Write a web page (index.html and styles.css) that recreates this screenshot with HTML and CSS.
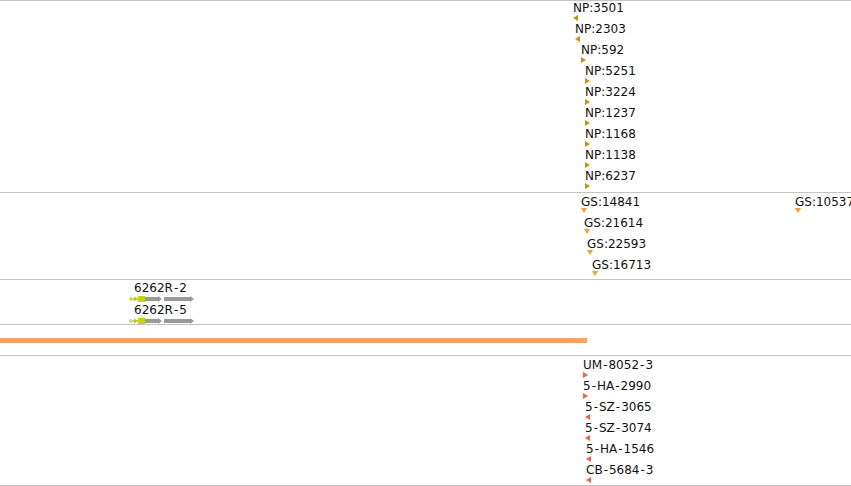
FILE: index.html
```html
<!DOCTYPE html>
<html lang="en">
<head>
    <meta charset="UTF-8">
    <title>Tracks</title>
    <link rel="stylesheet" href="styles.css">
</head>
<body>
    <div class="browser">
        <section class="track track-np">
            <div class="row"><span class="feat" style="left:573px"><span class="label">NP:3501</span><span class="tri tri-left np"></span></span></div>
            <div class="row"><span class="feat" style="left:575px"><span class="label">NP:2303</span><span class="tri tri-left np"></span></span></div>
            <div class="row"><span class="feat" style="left:581px"><span class="label">NP:592</span><span class="tri tri-right np"></span></span></div>
            <div class="row"><span class="feat" style="left:585px"><span class="label">NP:5251</span><span class="tri tri-right np"></span></span></div>
            <div class="row"><span class="feat" style="left:585px"><span class="label">NP:3224</span><span class="tri tri-right np"></span></span></div>
            <div class="row"><span class="feat" style="left:585px"><span class="label">NP:1237</span><span class="tri tri-right np"></span></span></div>
            <div class="row"><span class="feat" style="left:585px"><span class="label">NP:1168</span><span class="tri tri-right np"></span></span></div>
            <div class="row"><span class="feat" style="left:585px"><span class="label">NP:1138</span><span class="tri tri-right np"></span></span></div>
            <div class="row"><span class="feat" style="left:585px"><span class="label">NP:6237</span><span class="tri tri-right np"></span></span></div>
        </section>

        <section class="track track-gs">
            <div class="row">
                <span class="feat" style="left:581px"><span class="label">GS:14841</span><span class="tri tri-down gs"></span></span>
                <span class="feat" style="left:795px"><span class="label">GS:10537</span><span class="tri tri-down gs"></span></span>
            </div>
            <div class="row"><span class="feat" style="left:584px"><span class="label">GS:21614</span><span class="tri tri-down gs"></span></span></div>
            <div class="row"><span class="feat" style="left:587px"><span class="label">GS:22593</span><span class="tri tri-down gs"></span></span></div>
            <div class="row"><span class="feat" style="left:592px"><span class="label">GS:16713</span><span class="tri tri-down gs"></span></span></div>
        </section>

        <section class="track track-gene">
            <div class="row row-gene">
                <span class="feat" style="left:128px">
                    <span class="label label-gene">6262R<span class="dash">-</span>2</span>
                    <svg class="gene" width="68" height="8" viewBox="0 0 68 8">
                        <rect x="1" y="3.5" width="10" height="1" fill="#a0a0a0"/>
                        <polygon points="2,1.5 6,4 2,6.5" fill="#c8dc50"/>
                        <polygon points="6,1.5 10,4 6,6.5" fill="#b4cc20"/>
                        <rect x="10" y="1" width="7" height="6" fill="#c2d500"/>
                        <polygon points="17,2 30,2 30,1 34,4 30,7 30,6 17,6" fill="#9a9a9a"/>
                        <polygon points="36,2 62,2 62,1 66,4 62,7 62,6 36,6" fill="#9a9a9a"/>
                    </svg>
                </span>
            </div>
            <div class="row row-gene">
                <span class="feat" style="left:128px">
                    <span class="label label-gene">6262R<span class="dash">-</span>5</span>
                    <svg class="gene" width="68" height="8" viewBox="0 0 68 8">
                        <rect x="1" y="3.5" width="10" height="1" fill="#a0a0a0"/>
                        <polygon points="2,1.5 6,4 2,6.5" fill="#c8dc50"/>
                        <polygon points="6,1.5 10,4 6,6.5" fill="#b4cc20"/>
                        <rect x="10" y="1" width="7" height="6" fill="#c2d500"/>
                        <polygon points="17,2 30,2 30,1 34,4 30,7 30,6 17,6" fill="#9a9a9a"/>
                        <polygon points="36,2 62,2 62,1 66,4 62,7 62,6 36,6" fill="#9a9a9a"/>
                    </svg>
                </span>
            </div>
        </section>

        <section class="track track-bar">
            <div class="range-bar" style="width:587px"></div>
        </section>

        <section class="track track-snp">
            <div class="row"><span class="feat" style="left:583px"><span class="label">UM<span class="dash">-</span>8052<span class="dash">-</span>3</span><span class="tri tri-right snp"></span></span></div>
            <div class="row"><span class="feat" style="left:583px"><span class="label">5<span class="dash">-</span>HA<span class="dash">-</span>2990</span><span class="tri tri-right snp"></span></span></div>
            <div class="row"><span class="feat" style="left:585px"><span class="label">5<span class="dash">-</span>SZ<span class="dash">-</span>3065</span><span class="tri tri-left snp"></span></span></div>
            <div class="row"><span class="feat" style="left:585px"><span class="label">5<span class="dash">-</span>SZ<span class="dash">-</span>3074</span><span class="tri tri-left snp"></span></span></div>
            <div class="row"><span class="feat" style="left:586px"><span class="label">5<span class="dash">-</span>HA<span class="dash">-</span>1546</span><span class="tri tri-left snp"></span></span></div>
            <div class="row"><span class="feat" style="left:586px"><span class="label">CB<span class="dash">-</span>5684<span class="dash">-</span>3</span><span class="tri tri-left snp"></span></span></div>
        </section>
    </div>
</body>
</html>
```

FILE: styles.css
```css
body {
    margin: 0;
    background: #ffffff;
    font-family: 'DejaVu Sans', 'Liberation Sans', sans-serif;
    font-size: 12px;
    color: #111111;
}

.browser {
    width: 851px;
    height: 486px;
    overflow: hidden;
    border-top: 1px solid #c4c4c4;
    box-sizing: border-box;
    display: flex;
    flex-direction: column;
}

.track {
    position: relative;
    box-sizing: border-box;
    border-bottom: 1px solid #c4c4c4;
    flex-shrink: 0;
}

.track-np {
    height: 192px;
}

.track-gs {
    height: 87px;
    padding-top: 2px;
}

.track-gene {
    height: 45px;
    padding-top: 1px;
}

.track-bar {
    height: 31px;
    padding-top: 13px;
}

.track-snp {
    height: 130px;
    padding-top: 2px;
}

.row {
    position: relative;
    height: 21px;
}

.row-gene {
    height: 22px;
}

.feat {
    position: absolute;
    top: 0;
    display: flex;
    flex-direction: column;
    align-items: flex-start;
}

.label {
    line-height: 14px;
    white-space: nowrap;
}

.dash {
    padding: 0 1px;
}

.tri {
    display: block;
    width: 5px;
    height: 6px;
}

.tri-left {
    clip-path: polygon(100% 0, 0 50%, 100% 100%);
}

.tri-right {
    clip-path: polygon(0 0, 100% 50%, 0 100%);
}

.tri-down {
    width: 6px;
    height: 5px;
    margin-top: -1px;
    clip-path: polygon(0 0, 100% 0, 50% 100%);
}

.np {
    background: #cc8f0e;
}

.gs {
    background: #f2a12a;
}

.snp {
    background: #f2613c;
}

.label-gene {
    margin-left: 6px;
}

.gene {
    display: block;
}

.range-bar {
    height: 5px;
    background: #f5a36c;
}
```
